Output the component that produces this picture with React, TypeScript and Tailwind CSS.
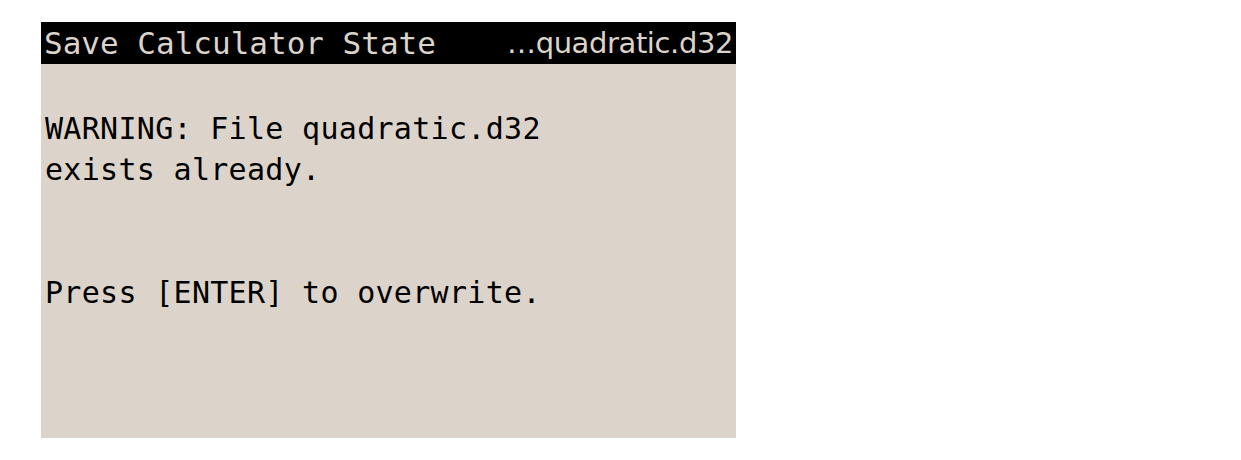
import React from 'react'

const mono = "font-['DejaVu_Sans_Mono',monospace]"

export default function App() {
    return (
        <div className="w-[1241px] h-[460px] bg-white pt-[22px] pl-[41px]">
            <div className="w-[695px] h-[416px] bg-[#dcd4cb] flex flex-col">
                <div className="h-[42px] bg-black flex items-center justify-between pl-[3px] pr-[3px] text-[#dcd4cb]">
                    <span className={`${mono} text-[31px] leading-none`}>Save Calculator State</span>
                    <span className="font-['DejaVu_Sans',sans-serif] text-[29px] leading-none tracking-[-0.4px]">…quadratic.d32</span>
                </div>
                <div className={`${mono} text-[30px] leading-[41px] tracking-[0.3px] text-black pl-[4px] pt-[44px]`}>
                    <p>WARNING: File quadratic.d32</p>
                    <p>exists already.</p>
                    <p className="mt-[82px]">Press [ENTER] to overwrite.</p>
                </div>
            </div>
        </div>
    )
}
